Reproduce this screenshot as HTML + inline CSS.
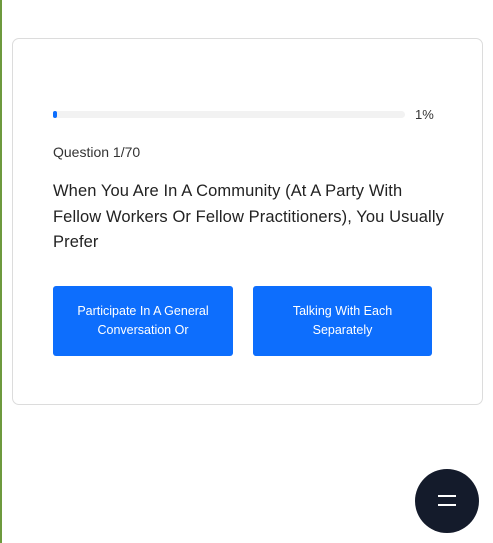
<!DOCTYPE html>
<html><head><style>
body{margin:0;width:493px;height:543px;background:#fff;font-family:"Liberation Sans",sans-serif;position:relative;overflow:hidden}
.g{position:absolute;left:0;top:0;width:2px;height:543px;background:#6d9a3d}
.card{position:absolute;left:12px;top:38px;width:469px;height:365px;border:1px solid #dcdcdc;border-radius:7px}
.bar{position:absolute;left:53px;top:111px;width:352px;height:7px;background:#f2f2f2;border-radius:4px}
.fill{width:4px;height:7px;background:#0d6efd;border-radius:4px}
.pct{position:absolute;left:415px;top:107px;font-size:13px;color:#333}
.q{position:absolute;left:53px;top:144px;font-size:14px;color:#333}
.t{position:absolute;left:53px;top:179px;width:420px;font-size:16.5px;letter-spacing:0.1px;line-height:25.5px;color:#222}
.b{position:absolute;top:286px;width:180px;height:70px;background:#0d6efd;border-radius:3px;color:#fff;font-size:12.5px;line-height:19px;display:flex;align-items:center;justify-content:center;text-align:center}
.c{position:absolute;left:415px;top:469px;width:64px;height:64px;border-radius:50%;background:#141b2b}
.l{position:absolute;left:23px;width:18px;height:2px;background:#fff}
</style></head><body>
<div class="g"></div>
<div class="card"></div>
<div class="bar"><div class="fill"></div></div>
<div class="pct">1%</div>
<div class="q">Question 1/70</div>
<div class="t">When You Are In A Community (At A Party With<br>Fellow Workers Or Fellow Practitioners), You Usually<br>Prefer</div>
<div class="b" style="left:53px">Participate In A General<br>Conversation Or</div>
<div class="b" style="left:253px;width:179px">Talking With Each<br>Separately</div>
<div class="c"><div class="l" style="top:26px"></div><div class="l" style="top:35px"></div></div>
</body></html>
